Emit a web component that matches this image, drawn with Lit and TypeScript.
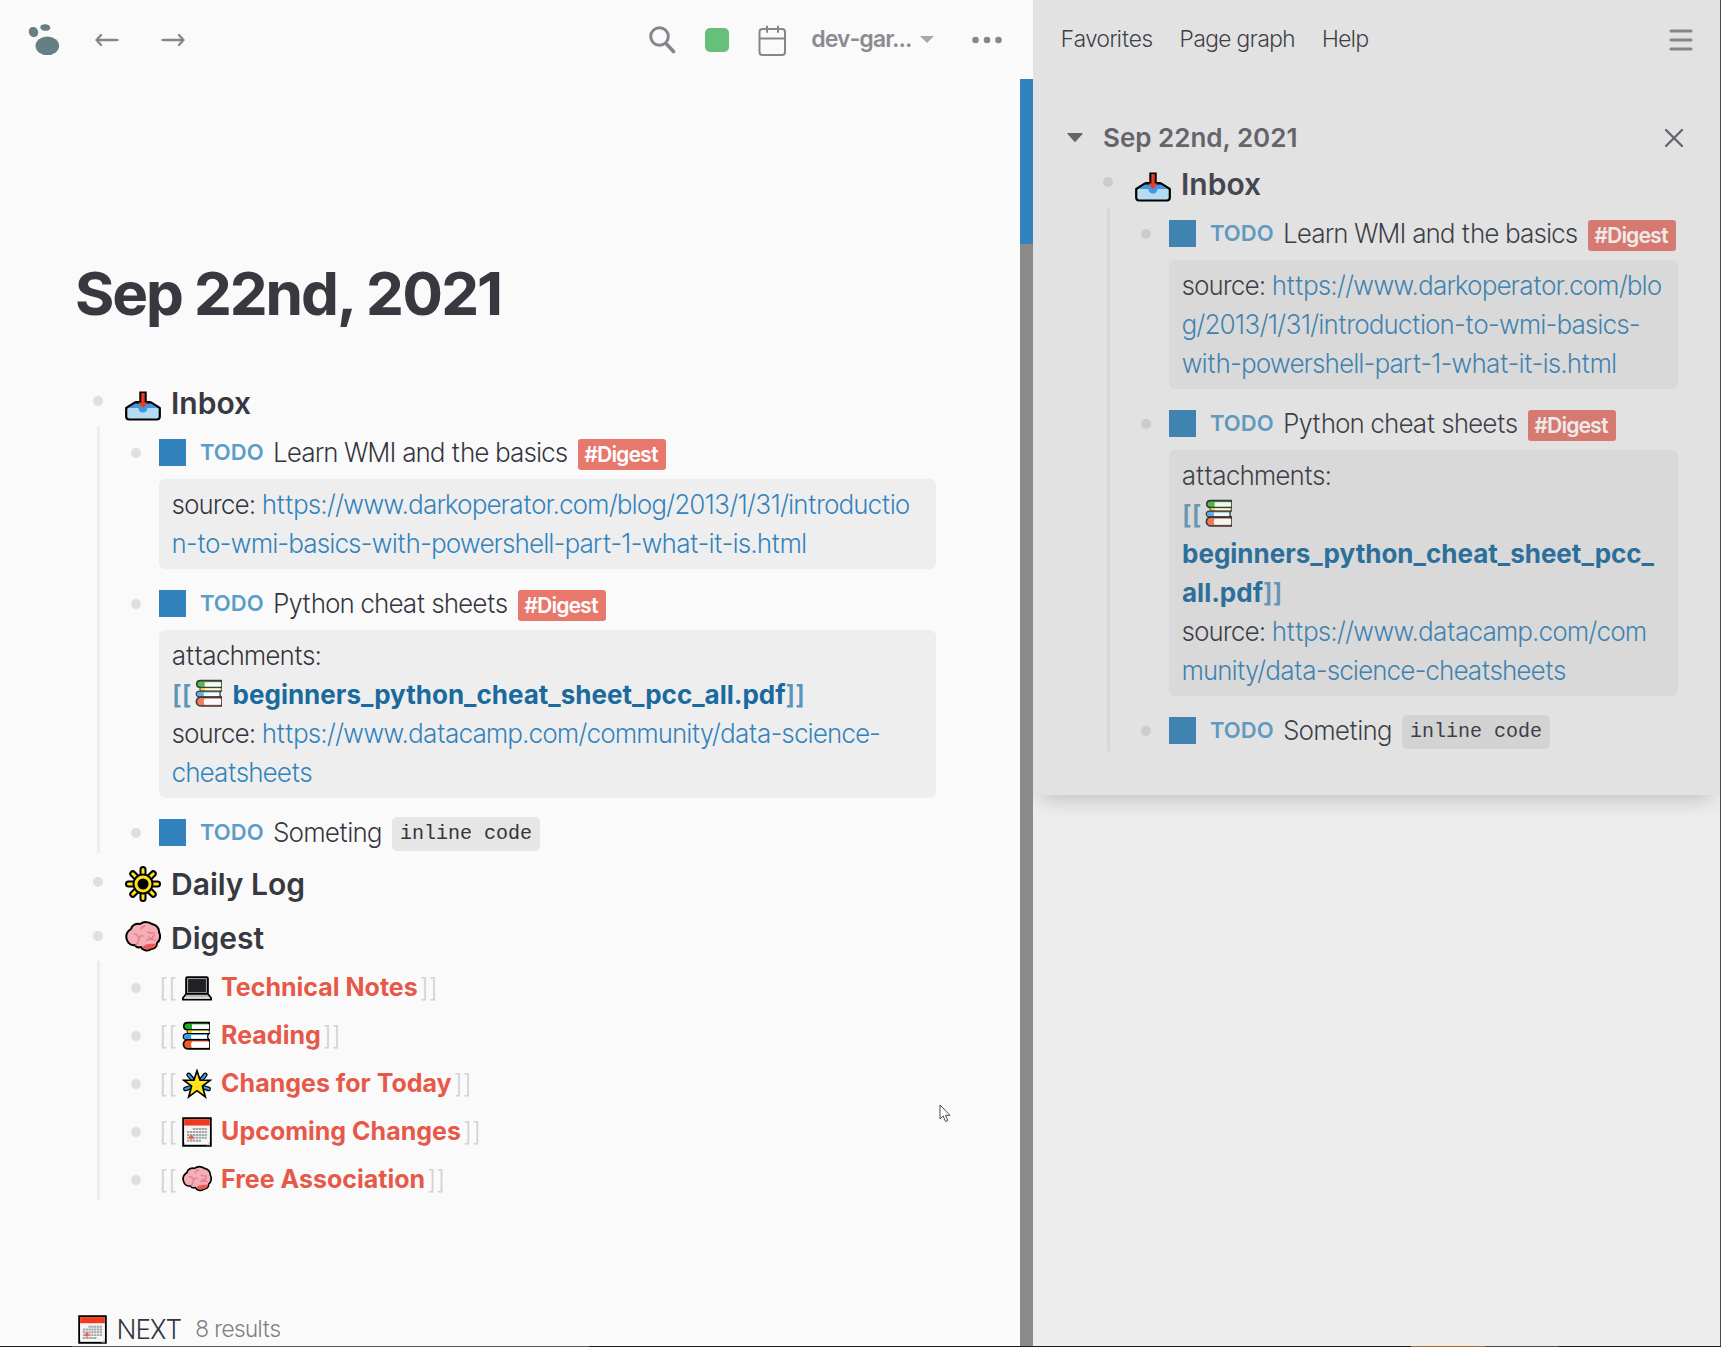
import { LitElement, html, svg, css, nothing, TemplateResult } from "lit";
import { customElement, property } from "lit/decorators.js";

/* ---------- pictograms ---------- */

const rays = [0, 45, 90, 135, 180, 225, 270, 315];

const pictograms: Record<string, TemplateResult> = {
  inbox: svg`
    <path d="M1.200 23 10 17.500h16l8.800 5.500v8.500c0 2-1 3-3 3H4.200c-2 0-3-1-3-3z" fill="#b5dcf3" stroke="#000" stroke-width="2.200" stroke-linejoin="round"/>
    <path d="M3.500 23 10.500 18.500h15l7 4.500H22.500c0 6-9 6-9 0z" fill="#4297e0"/>
    <path d="M14.300 6.500h7.400v9.500h4v2.500H10.300V16h4z" fill="#000"/>
    <path d="M16.300 8h3.400v9.500h3L18 23l-4.700-5.500h3z" fill="#ef3a24"/>`,
  sun: svg`
    ${rays.map((a) => svg`<rect x="15.500" y="1" width="5" height="9" rx="2.500" fill="#ffe31a" stroke="#000" stroke-width="2" transform="rotate(${a} 18 18)"/>`)}
    <circle cx="18" cy="18" r="9.500" fill="#ffe31a" stroke="#000" stroke-width="2"/>
    <circle cx="18" cy="18" r="5.500" fill="#000"/>`,
  brain: svg`
    <path d="M2 20c-2-5 1-9 4-11 1-4 5-6 9-5 4-3 9-2 12 0 4 1 7 4 7 8 2 4 1 9-2 11 0 4-3 6-6 6-3 3-9 1-10-2-3 1-5 0-6-2-4 1-7-2-8-5z" fill="#f5adb6" stroke="#000" stroke-width="2" stroke-linejoin="round"/>
    <path d="M17 27c3-3 8-4 14-3 0 3-3 4-6 5-3 1-6 0-8-2z" fill="#ea5a57"/>
    <path d="M9 14c3 0 4 1 5 4 0 3-1 5-3 7M14 18c1-2 3-3 4-2M16 9c1-2 2-3 4-3M23 12c2 1 3 2 6 1M22 20c3-1 6-1 7-5M24 17c1 2 3 3 6 3" fill="none" stroke="#e5808c" stroke-width="1.600" stroke-linecap="round"/>`,
  laptop: svg`
    <rect x="5" y="5" width="26" height="20" rx="1.500" fill="#1f2123" stroke="#000" stroke-width="2.400"/>
    <rect x="6.700" y="6.700" width="22.600" height="17" fill="#1f2123" stroke="#a4a7aa" stroke-width="1.200"/>
    <path d="M5 25h26l4 5v2H1v-2z" fill="#b8babc" stroke="#000" stroke-width="2" stroke-linejoin="round"/>
    <path d="M3 30h30" stroke="#ececec" stroke-width="1.600"/>`,
  books: svg`
    <path d="M7 2h25.500v8.500H7C.5 10.500 .5 2 7 2z" fill="#1fae1f" stroke="#000" stroke-width="2"/>
    <path d="M12 4h20.500v5.500H12z" fill="#fff"/>
    <path d="M9 10.500h23.500v4.500H9c-4 0-4-4.500 0-4.500z" fill="#f6c915" stroke="#000" stroke-width="1.200"/>
    <path d="M12 12h20v2.400H12z" fill="#fff"/>
    <path d="M6 15h26.500c-2 2-2 5 0 7.500H6c-6 0-6-7.500 0-7.500z" fill="#3f9be0" stroke="#000" stroke-width="1.400"/>
    <path d="M11 16.800h19v4.500H11z" fill="#fff"/>
    <path d="M7 22.500h25.500v11H7c-7 0-7-11 0-11z" fill="#f05a28" stroke="#000" stroke-width="2"/>
    <path d="M12 24.500h20.500v7.500H12c-1.500-2-1.500-5.500 0-7.500z" fill="#fff"/>`,
  star: svg`
    <g stroke="#000" stroke-width="5.500" stroke-linecap="round"><path d="M8 7l5 6M28 7l-5 6M4 24l6-2M32 24l-6-2"/></g>
    <g stroke="#35a8e6" stroke-width="2.600" stroke-linecap="round"><path d="M8 7l5 6M28 7l-5 6M4 24l6-2M32 24l-6-2"/></g>
    <path d="M18 2l3.700 11.500H34l-9.500 7L28 33.500 18 26 8 33.500l3.500-13-9.500-7h12.300z" fill="#ffe31a" stroke="#000" stroke-width="2"/>`,
  calendar: svg`
    <rect x="1.500" y="1.500" width="33" height="33" fill="#fff" stroke="#000" stroke-width="2.400"/>
    <rect x="2.700" y="2.700" width="30.600" height="7.800" fill="#f03a1d"/>
    <rect x="2.700" y="10.500" width="30.600" height="20" fill="#f4f4f4"/>
    <g stroke="#a3a5a7" stroke-width="2.400" stroke-dasharray="2.800 .7"><path d="M13 14.500h17M6 18h24M6 21.500h24M6 25h24M6 28.500h17"/></g>
    <circle cx="11" cy="24.500" r="2.600" fill="#f4623f"/>
    <path d="M29 34l4.500-4.500V34z" fill="#c9c9c9"/>`,
};

@customElement("picto-gram")
class PictoGram extends LitElement {
  @property() name = "inbox";
  static styles = css`
    :host {
      display: inline-block;
      width: 1em;
      height: 1em;
    }
    .art {
      display: block;
      width: 100%;
      height: 100%;
    }
  `;
  render() {
    return html`<svg class="art" viewBox="0 0 36 36" aria-hidden="true">${pictograms[this.name]}</svg>`;
  }
}

/* ---------- outline data ---------- */

interface Prop {
  key: string;
  url?: string;
  file?: string;
}
interface Item {
  todo?: string;
  tag?: string;
  code?: string;
  props?: Prop[];
  page?: string;
  icon?: string;
}
interface Section {
  icon: string;
  title: string;
  items: Item[];
}

const inbox: Section = {
  icon: "inbox",
  title: "Inbox",
  items: [
    {
      todo: "Learn WMI and the basics",
      tag: "#Digest",
      props: [
        {
          key: "source",
          url: "https://www.darkoperator.com/blog/2013/1/31/introduction-to-wmi-basics-with-powershell-part-1-what-it-is.html",
        },
      ],
    },
    {
      todo: "Python cheat sheets",
      tag: "#Digest",
      props: [
        { key: "attachments", file: "beginners_python_cheat_sheet_pcc_all.pdf" },
        { key: "source", url: "https://www.datacamp.com/community/data-science-cheatsheets" },
      ],
    },
    { todo: "Someting", code: "inline code" },
  ],
};

const journal: Section[] = [
  inbox,
  { icon: "sun", title: "Daily Log", items: [] },
  {
    icon: "brain",
    title: "Digest",
    items: [
      { page: "Technical Notes", icon: "laptop" },
      { page: "Reading", icon: "books" },
      { page: "Changes for Today", icon: "star" },
      { page: "Upcoming Changes", icon: "calendar" },
      { page: "Free Association", icon: "brain" },
    ],
  },
];

@customElement("block-outline")
class BlockOutline extends LitElement {
  @property({ attribute: false }) sections: Section[] = [];

  static styles = css`
    :host {
      display: block;
    }
    ul {
      list-style: none;
      margin: 0;
      padding: 0;
    }
    a {
      color: inherit;
      text-decoration: none;
    }
    .sections {
      display: flex;
      flex-direction: column;
      gap: 8px;
    }
    .head {
      display: flex;
      align-items: center;
      height: 46px;
    }
    .dot {
      flex: none;
      width: 10px;
      height: 10px;
      border-radius: 50%;
      background: var(--dot);
    }
    .head .dot {
      margin-bottom: 4px;
    }
    .title {
      display: flex;
      align-items: center;
      gap: 10px;
      margin: 0 0 0 22px;
      font: 600 30px/46px Inter, "Liberation Sans", sans-serif;
      color: var(--strong);
    }
    .title picto-gram {
      font-size: 36px;
    }
    .children {
      display: flex;
      flex-direction: column;
      gap: 9px;
      margin-left: 4px;
      padding: 7px 0 1px 31px;
      border-left: 3px solid var(--guide);
    }
    .block {
      display: grid;
      grid-template-columns: 10px minmax(0, 1fr);
      column-gap: 18px;
    }
    .bullet {
      display: flex;
      align-items: center;
      height: 39px;
    }
    .line {
      display: flex;
      align-items: center;
      height: 39px;
      white-space: nowrap;
    }
    .check {
      appearance: none;
      flex: none;
      width: 27px;
      height: 27px;
      margin: 0 14px 0 0;
      background: var(--check);
    }
    .marker {
      margin-right: 10px;
      font: 600 22px/39px Inter, "Liberation Sans", sans-serif;
      color: var(--marker);
    }
    .tag {
      margin: 3px 0 0 10px;
      padding: 0 7px;
      border-radius: 3px;
      background: var(--tag);
      color: var(--tag-text);
      font-size: 21px;
      line-height: 31px;
      font-weight: 600;
    }
    .code {
      margin: 3px 0 0 10px;
      padding: 0 8px;
      border-radius: 5px;
      background: var(--code);
      font: 20px/34px "Liberation Mono", monospace;
    }
    .props {
      margin: 7px 0 6px;
      padding: 6px 13px;
      border-radius: 6px;
      background: var(--props);
      overflow-wrap: anywhere;
    }
    .url {
      color: var(--link);
    }
    .origin {
      word-break: break-all;
    }
    .file,
    .fence {
      font-family: Inter, "Liberation Sans", sans-serif;
      font-weight: 700;
      color: var(--file);
    }
    .file picto-gram {
      margin: 0 2px 0 4px;
      vertical-align: -4px;
      font-size: 29px;
      opacity: 0.75;
    }
    .fence {
      font-weight: 600;
      color: var(--fence);
    }
    .brackets {
      font-family: Inter, "Liberation Sans", sans-serif;
      color: #d2d3d4;
    }
    .page {
      display: flex;
      align-items: center;
      gap: 9px;
      margin: 0 2px 0 5px;
      font: 700 25px/39px Inter, "Liberation Sans", sans-serif;
      color: #e65949;
    }
    .page picto-gram {
      font-size: 30px;
    }
  `;

  /* The part of a URL before its first hyphen may break at any letter; the rest breaks at hyphens. */
  private renderUrl(url: string) {
    const cut = url.indexOf("-") + 1;
    return html`<a class="url" href=${url}><span class="origin">${url.slice(0, cut)}</span>${url.slice(cut)}</a>`;
  }

  private renderProp(p: Prop) {
    return p.file
      ? html`<div>${p.key}:</div>
          <div><span class="fence">[[</span><a class="file" href="#"><picto-gram name="books"></picto-gram> ${p.file}</a><span class="fence">]]</span></div>`
      : html`<div>${p.key}: ${this.renderUrl(p.url!)}</div>`;
  }

  private renderItem(item: Item) {
    return html`<li class="block">
      <span class="bullet"><span class="dot"></span></span>
      <div>
        ${item.page
          ? html`<div class="line">
              <span class="brackets">[[</span>
              <a class="page" href="#"><picto-gram name=${item.icon!}></picto-gram>${item.page}</a>
              <span class="brackets">]]</span>
            </div>`
          : html`<div class="line">
              <input class="check" type="checkbox" aria-label=${item.todo!} />
              <a class="marker" href="#">TODO</a>
              <span>${item.todo}</span>
              ${item.tag ? html`<a class="tag" href="#">${item.tag}</a>` : nothing}
              ${item.code ? html`<code class="code">${item.code}</code>` : nothing}
            </div>`}
        ${item.props ? html`<div class="props">${item.props.map((p) => this.renderProp(p))}</div>` : nothing}
      </div>
    </li>`;
  }

  render() {
    return html`<ul class="sections">
      ${this.sections.map(
        (s) => html`<li>
          <div class="head">
            <span class="dot"></span>
            <h2 class="title"><picto-gram name=${s.icon}></picto-gram>${s.title}</h2>
          </div>
          ${s.items.length ? html`<ul class="children">${s.items.map((i) => this.renderItem(i))}</ul>` : nothing}
        </li>`
      )}
    </ul>`;
  }
}

@customElement("app-root")
class AppRoot extends LitElement {
  static styles = css`
    :host {
      display: flex;
      flex-direction: column;
      height: 100vh;
      overflow: hidden;
      box-sizing: border-box;
      position: relative;
      font: 300 26px/39px "Inter Tight", Inter, "Liberation Sans", sans-serif;
      color: #33343d;
      background: #fafafa;
    }
    a {
      color: inherit;
      text-decoration: none;
    }
    button {
      display: flex;
      align-items: center;
      padding: 0;
      border: 0;
      background: none;
      font: inherit;
      color: inherit;
    }
    svg {
      display: block;
    }
    .panes {
      flex: 1;
      min-height: 0;
      display: grid;
      grid-template-columns: calc(60% + 1px) minmax(0, 1fr);
      border-right: 1px solid #4b4c50;
    }
    .main {
      display: flex;
      flex-direction: column;
      min-height: 0;
      --dot: #dfdfdf;
      --guide: #ededed;
      --strong: #383841;
      --check: #3182bd;
      --marker: #5b9dc9;
      --tag: #e8776c;
      --tag-text: #fff;
      --code: #e6e6e6;
      --props: #eeeeee;
      --link: #3182bd;
      --file: #1a6a9e;
      --fence: #5b95bd;
    }
    .bar {
      flex: none;
      display: flex;
      align-items: center;
      height: 79px;
      box-sizing: border-box;
      color: #85868b;
    }
    .main .bar {
      padding: 0 31px 0 28px;
    }
    .arrows {
      display: flex;
      gap: 42px;
      margin-left: 34px;
    }
    .tools {
      display: flex;
      align-items: center;
      margin-left: auto;
      gap: 29px;
    }
    .status {
      width: 24px;
      height: 24px;
      border-radius: 5px;
      background: #66bf7a;
    }
    .graph {
      gap: 8px;
      margin: 0 9px 0 -3px;
      font-size: 23px;
      font-weight: 600;
      color: #8b8c90;
    }
    .scroller {
      flex: 1;
      min-height: 0;
      display: flex;
    }
    .page {
      flex: 1;
      min-width: 0;
      overflow: hidden;
      padding: 178px 84px 0 76px;
    }
    .heading {
      margin: 0 0 51px;
      font-size: 60px;
      line-height: 72px;
      font-weight: 700;
      color: #383841;
    }
    .page block-outline {
      margin-left: 17px;
    }
    .query {
      display: flex;
      align-items: center;
      gap: 10px;
      margin-top: 110px;
      padding-left: 2px;
    }
    .query picto-gram {
      font-size: 29px;
    }
    .count {
      margin-left: 4px;
      font-size: 23px;
      color: #7c7d82;
    }
    .track {
      flex: none;
      width: 13px;
      background: #8a8a8a;
    }
    .thumb {
      height: 165px;
      background: #3182bd;
    }
    .side {
      overflow: hidden;
      background: #ededed;
      color: #3d3e46;
      --dot: #cccccd;
      --guide: #d8d8d8;
      --strong: #45464f;
      --check: #4083b0;
      --marker: #6199bf;
      --tag: #d67a71;
      --tag-text: #eeeaea;
      --code: #d3d3d3;
      --props: #d9d9d9;
      --link: #3f82b0;
      --file: #2d6f9b;
      --fence: #6795b3;
    }
    .card {
      padding: 0 42px 44px 28px;
      background: #e2e2e2;
      box-shadow: 0 12px 20px -8px rgba(0, 0, 0, 0.2);
    }
    .side .bar {
      gap: 27px;
      margin-right: -15px;
      font-size: 23px;
      color: #3d3e46;
    }
    .menu {
      margin-left: auto;
      color: #85868b;
    }
    .day {
      display: flex;
      align-items: center;
      height: 39px;
      margin: 39px -6px 4px 6px;
      color: #64656b;
    }
    .date {
      flex: 1;
      margin: 0 0 0 20px;
      font: 600 26px/39px Inter, "Liberation Sans", sans-serif;
    }
    .side block-outline {
      margin-left: 42px;
    }
    .shelf {
      flex: none;
      height: 1px;
      background: linear-gradient(
        90deg,
        #1b1b1d 4.2%,
        #5b5b5b 4.2% 34.2%,
        #1b1b1d 34.2% 82%,
        #b3661f 82% 86.3%,
        #4a4950 86.3% 90.6%,
        #1b1b1d 90.6%
      );
    }
    .pointer {
      position: absolute;
      left: 939px;
      top: 1104px;
    }
  `;

  render() {
    return html`
      <div class="panes">
        <main class="main">
          <header class="bar">
            <button aria-label="Home">
              <svg width="33" height="33" viewBox="0 0 33 33" fill="#667f85">
                <ellipse cx="5.500" cy="9" rx="4.600" ry="5.200" transform="rotate(-25 5.500 9)" />
                <ellipse cx="17.300" cy="4.500" rx="5.100" ry="3.300" transform="rotate(7 17.300 4.500)" />
                <ellipse cx="19.300" cy="22.800" rx="11.800" ry="9.300" />
              </svg>
            </button>
            <nav class="arrows">
              <button aria-label="Back">
                <svg width="24" height="14" viewBox="0 0 24 14" fill="none" stroke="currentColor" stroke-width="2.300" stroke-linecap="round" stroke-linejoin="round"><path d="M22.500 7H2M6 2 1.500 7 6 12" /></svg>
              </button>
              <button aria-label="Forward">
                <svg width="24" height="14" viewBox="0 0 24 14" fill="none" stroke="currentColor" stroke-width="2.300" stroke-linecap="round" stroke-linejoin="round"><path d="M1.500 7H22M18 2l4.500 5L18 12" /></svg>
              </button>
            </nav>
            <div class="tools">
              <button aria-label="Search">
                <svg width="27" height="28" viewBox="0 0 27 28" fill="none" stroke="currentColor" stroke-linecap="round"><circle cx="10.500" cy="10.500" r="8.800" stroke-width="3" /><path d="M17 17.500l7.500 8" stroke-width="3.600" /></svg>
              </button>
              <button class="status" aria-label="Sync status"></button>
              <button aria-label="Journals">
                <svg width="28" height="32" viewBox="0 0 28 32" fill="none" stroke="currentColor" stroke-width="2" stroke-linecap="round"><rect x="1.500" y="5" width="25.500" height="26" rx="3" /><path d="M2 14.500h25M9 2.500v5.500M20 2.500v5.500" /></svg>
              </button>
              <button class="graph">
                dev-gar...
                <svg width="14" height="7" viewBox="0 0 14 7" fill="#a3a9b3"><path d="M0 0h14L7 7z" /></svg>
              </button>
              <button aria-label="More">
                <svg width="30" height="8" viewBox="0 0 30 8" fill="currentColor"><circle cx="3.500" cy="4" r="3.300" /><circle cx="15" cy="4" r="3.300" /><circle cx="26.500" cy="4" r="3.300" /></svg>
              </button>
            </div>
          </header>
          <div class="scroller">
            <article class="page">
              <h1 class="heading">Sep 22nd, 2021</h1>
              <block-outline .sections=${journal}></block-outline>
              <div class="query">
                <picto-gram name="calendar"></picto-gram>
                <span>NEXT</span>
                <span class="count">8 results</span>
              </div>
            </article>
            <div class="track"><div class="thumb"></div></div>
          </div>
        </main>
        <aside class="side">
          <div class="card">
            <nav class="bar">
              <a href="#">Favorites</a>
              <a href="#">Page graph</a>
              <a href="#">Help</a>
              <button class="menu" aria-label="Toggle sidebar">
                <svg width="24" height="22" viewBox="0 0 24 22" stroke="currentColor" stroke-width="3" stroke-linecap="round"><path d="M2 2h20M2 11h20M2 20h20" /></svg>
              </button>
            </nav>
            <div class="day">
              <button aria-label="Collapse">
                <svg width="16" height="9" viewBox="0 0 16 9" fill="currentColor"><path d="M1 0h14q1 0 .5 1L9 8.300q-1 1-2 0L.5 1Q0 0 1 0z" /></svg>
              </button>
              <h2 class="date">Sep 22nd, 2021</h2>
              <button aria-label="Close">
                <svg width="20" height="20" viewBox="0 0 20 20" fill="none" stroke="currentColor" stroke-width="2.300" stroke-linecap="round"><path d="M2 2l16 16M18 2 2 18" /></svg>
              </button>
            </div>
            <block-outline .sections=${[inbox]}></block-outline>
          </div>
        </aside>
      </div>
      <div class="shelf"></div>
      <svg class="pointer" width="13" height="19" viewBox="0 0 13 19" fill="#fff" stroke="#4a4a4a" stroke-width="1"><path d="M1 1v14l3.200-3 2.300 5.500 2.300-1L6.500 11.300H11z" /></svg>
    `;
  }
}
